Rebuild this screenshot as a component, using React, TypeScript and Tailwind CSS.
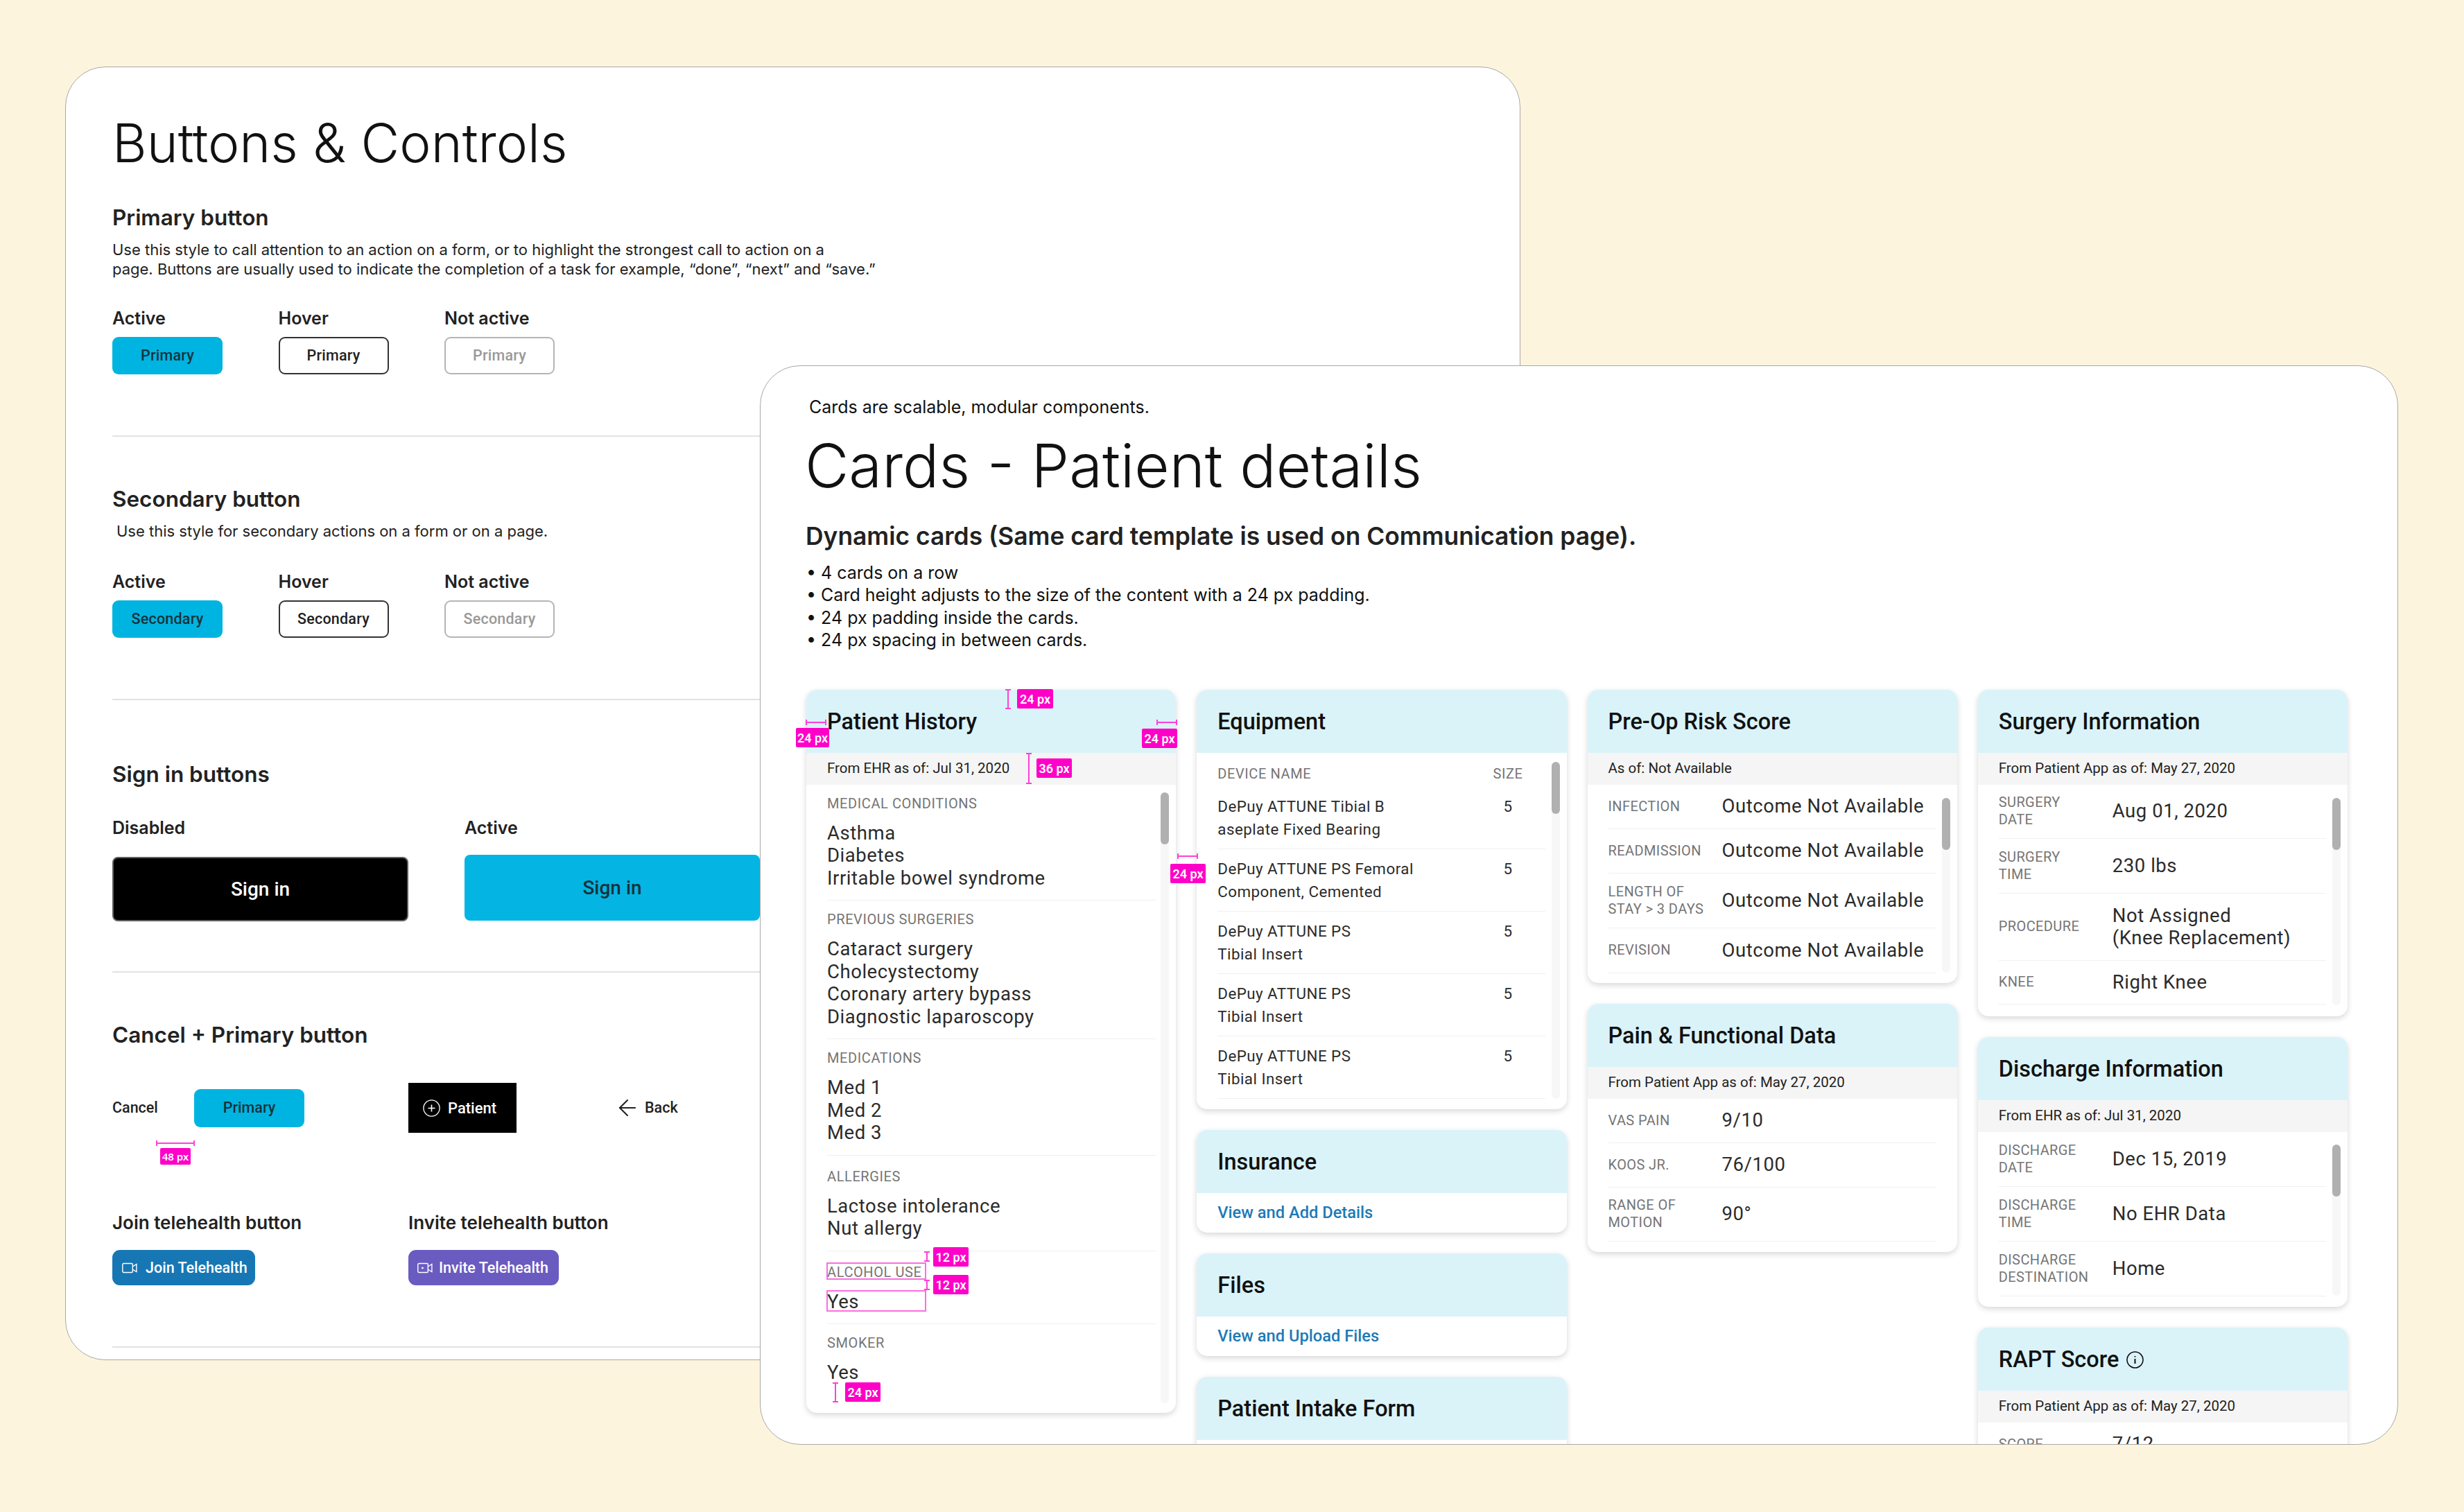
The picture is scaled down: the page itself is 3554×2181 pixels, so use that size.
import { ArrowLeft } from "lucide-react";
import type { ReactNode } from "react";

const history = [
  { label: "MEDICAL CONDITIONS", values: ["Asthma", "Diabetes", "Irritable bowel syndrome"], cls: "pt-[15px] border-b" },
  { label: "PREVIOUS SURGERIES", values: ["Cataract surgery", "Cholecystectomy", "Coronary artery bypass", "Diagnostic laparoscopy"], cls: "pt-[15px] border-b" },
  { label: "MEDICATIONS", values: ["Med 1", "Med 2", "Med 3"], cls: "pt-[15px] border-b" },
  { label: "ALLERGIES", values: ["Lactose intolerance", "Nut allergy"], cls: "pt-[18px] border-b" },
  { label: "ALCOHOL USE", values: ["Yes"], cls: "pt-[18px] border-b" },
  { label: "SMOKER", values: ["Yes"], cls: "pt-[15px]" },
];

const devices = [
  ["DePuy ATTUNE Tibial B", "aseplate Fixed Bearing"],
  ["DePuy ATTUNE PS Femoral", "Component, Cemented"],
  ["DePuy ATTUNE PS", "Tibial Insert"],
  ["DePuy ATTUNE PS", "Tibial Insert"],
  ["DePuy ATTUNE PS", "Tibial Insert"],
];

function ButtonRow({ text, className }: { text: string; className: string }) {
  return (
    <>
      <div className={`grid grid-cols-[239.5px_239.5px_239.5px] text-[25px] leading-[30px] font-semibold text-[#222] ${className}`}>
        <span>Active</span>
        <span>Hover</span>
        <span>Not active</span>
      </div>
      <div className="mt-[12px] grid grid-cols-[239.5px_239.5px_239.5px] font-['Roboto',sans-serif] text-[21.5px] font-medium tracking-[0.01em]">
        <div className="flex h-[54px] w-[159px] items-center justify-center rounded-[9px] bg-[#00b4e1] text-[#17323c]">{text}</div>
        <div className="flex h-[54px] w-[159px] items-center justify-center rounded-[9px] border-2 border-[#333] text-[#222]">{text}</div>
        <div className="flex h-[54px] w-[159px] items-center justify-center rounded-[9px] border-2 border-[#b5b5b5] text-[#999]">{text}</div>
      </div>
    </>
  );
}

function Divider({ className }: { className: string }) {
  return <div className={`h-[2px] bg-[#e2e2e2] ${className}`} />;
}

function Heading({ children, className }: { children: ReactNode; className: string }) {
  return <h2 className={`text-[31.5px] leading-[40px] font-semibold text-[#222] ${className}`}>{children}</h2>;
}

function ButtonsWindow() {
  return (
    <section className="absolute top-[96px] left-[94px] h-[1866px] w-[2099px] overflow-hidden rounded-[58px] border border-[#a8a8a8] bg-white pt-[64px] pl-[67px] font-['Inter',sans-serif]">
      <h1 className="text-[76.5px] leading-[90px] font-light text-[#111]">Buttons &amp; Controls</h1>
      <Heading className="mt-[43px]">Primary button</Heading>
      <p className="mt-[12px] w-[1200px] text-[22px] leading-[28px] text-[#222]">
        Use this style to call attention to an action on a form, or to highlight the strongest call to action on a
        <br />
        page. Buttons are usually used to indicate the completion of a task for example, “done”, “next” and “save.”
      </p>
      <ButtonRow text="Primary" className="mt-[42px]" />
      <Divider className="mt-[88px]" />
      <Heading className="mt-[70px]">Secondary button</Heading>
      <p className="mt-[12px] ml-[6px] text-[22px] leading-[28px] text-[#222]">
        Use this style for secondary actions on a form or on a page.
      </p>
      <ButtonRow text="Secondary" className="mt-[44px]" />
      <Divider className="mt-[88px]" />
      <Heading className="mt-[87px]">Sign in buttons</Heading>
      <div className="mt-[42px] flex items-start text-[25px] leading-[30px] font-semibold text-[#222]">
        <div className="w-[508px]">
          <div>Disabled</div>
          <div className="mt-[27px] flex h-[93px] w-[427px] items-center justify-center rounded-[8px] border-2 border-[#5f5f5f] bg-black font-['Roboto',sans-serif] text-[28px] font-medium text-white">
            Sign in
          </div>
        </div>
        <div>
          <div>Active</div>
          <div className="mt-[24px] flex h-[95px] w-[426px] items-center justify-center rounded-[8px] bg-[#04b5e3] font-['Roboto',sans-serif] text-[28px] font-medium text-[#17323c]">
            Sign in
          </div>
        </div>
      </div>
      <Divider className="mt-[72px]" />
      <Heading className="mt-[70px]">Cancel + Primary button</Heading>
      <div className="mt-[49px] flex h-[72px] items-center font-['Roboto',sans-serif] text-[21.5px] font-medium text-[#222]">
        <span className="w-[118px]">Cancel</span>
        <span className="flex h-[55px] w-[159px] items-center justify-center rounded-[9px] bg-[#00b4e1] text-[#17323c]">Primary</span>
        <div className="ml-[150px] flex h-[72px] w-[156px] items-center gap-[11px] bg-black pl-[21px] text-white">
          <svg viewBox="0 0 25 25" className="h-[25px] w-[25px]" fill="none" stroke="currentColor" strokeWidth="1.3">
            <circle cx="12.5" cy="12.5" r="11.6" />
            <path d="M12.5 7.5v10M7.5 12.5h10" strokeWidth="1.6" />
          </svg>
          <span className="text-[22px]">Patient</span>
        </div>
        <ArrowLeft className="ml-[141px] h-[38px] w-[38px]" strokeWidth={1.3} />
        <span className="ml-[6px]">Back</span>
      </div>
      <div className="mt-[115px] grid w-[1000px] grid-cols-[427px_auto] text-[26px] leading-[30px] font-semibold text-[#222]">
        <div>
          <div>Join telehealth button</div>
          <div className="mt-[24px] flex h-[51px] w-[206px] items-center gap-[12px] rounded-[11px] bg-[#1777b4] pl-[14px] font-['Roboto',sans-serif] text-[21.5px] font-medium text-white">
            <svg viewBox="0 0 22 16" className="h-[16px] w-[22px]" fill="none" stroke="currentColor" strokeWidth="1.4">
              <rect x="0.8" y="1.5" width="14.5" height="13" rx="1.5" />
              <path d="M15.3 6l5.6-3.5v11L15.3 10" />
            </svg>
            Join Telehealth
          </div>
        </div>
        <div>
          <div>Invite telehealth button</div>
          <div className="mt-[24px] flex h-[51px] w-[217px] items-center gap-[9px] rounded-[11px] bg-[#6a5bc1] pl-[13px] font-['Roboto',sans-serif] text-[21.5px] font-medium text-white">
            <svg viewBox="0 0 22 16" className="h-[16px] w-[22px]" fill="none" stroke="currentColor" strokeWidth="1.4">
              <rect x="0.8" y="1.5" width="14.5" height="13" rx="1.5" />
              <path d="M15.3 6l5.6-3.5v11L15.3 10" />
              <path d="M5.5 8h4M7.5 6.5v3" strokeWidth="1.2" />
            </svg>
            Invite Telehealth
          </div>
        </div>
      </div>
      <Divider className="mt-[88px]" />
    </section>
  );
}

function Card({ title, children, icon }: { title: string; children: ReactNode; icon?: ReactNode }) {
  return (
    <div className="overflow-hidden rounded-[15px] bg-white shadow-[0_3px_8px_rgba(0,0,0,0.16)]">
      <div className="flex h-[91px] items-center gap-[11px] bg-[#daf3f9] px-[30px] pt-[2px] text-[32.5px] font-medium text-[#111]">
        {title}
        {icon}
      </div>
      {children}
    </div>
  );
}

function SubBar({ children }: { children: ReactNode }) {
  return <div className="flex h-[46px] items-center bg-[#f5f5f5] px-[30px] text-[20.5px] text-[#222]">{children}</div>;
}

function Scroll({ className }: { className: string }) {
  return (
    <div className={`absolute right-[10px] w-[12px] rounded-[6px] bg-[#f7f7f7] ${className}`}>
      <div className="h-[75px] rounded-[6px] bg-[#b0b0b0]" />
    </div>
  );
}

function Field({ label, value, cls }: { label: ReactNode; value: ReactNode; cls: string }) {
  return (
    <div className={`flex items-center border-b border-[#f0f0f0] ${cls}`}>
      <div className="w-[164px] shrink-0 text-[20px] leading-[25px] tracking-[0.02em] text-[#757575]">{label}</div>
      <div className="text-[27.5px] leading-[32px] tracking-[0.02em] text-[#2b2b2b]">{value}</div>
    </div>
  );
}

function LinkCard({ title, link }: { title: string; link?: string }) {
  return (
    <Card title={title}>
      <div className="flex h-[57px] items-center px-[30px] pt-[1px] text-[23.7px] font-medium text-[#1d7ab5]">{link}</div>
    </Card>
  );
}

function PatientHistory() {
  return (
    <Card title="Patient History">
      <SubBar>From EHR as of: Jul 31, 2020</SubBar>
      <div className="relative pr-[29px] pb-[26px] pl-[30px]">
        {history.map((section) => (
          <div key={section.label} className={`border-[#f0f0f0] pb-[15px] ${section.cls}`}>
            <div className="text-[20px] leading-[24px] tracking-[0.03em] text-[#757575]">{section.label}</div>
            <div className="mt-[15px] text-[27.5px] leading-[32.5px] tracking-[0.02em] text-[#2b2b2b]">
              {section.values.map((v) => (
                <div key={v}>{v}</div>
              ))}
            </div>
          </div>
        ))}
        <Scroll className="top-[11px] bottom-[14px]" />
      </div>
    </Card>
  );
}

function Equipment() {
  return (
    <Card title="Equipment">
      <div className="relative pt-[18px] pr-[31px] pb-[15px] pl-[30px]">
        <div className="flex pb-[7px] text-[20px] leading-[24px] tracking-[0.03em] text-[#757575]">
          <span className="flex-1">DEVICE NAME</span>
          <span className="w-[107px] text-center">SIZE</span>
        </div>
        {devices.map((d, i) => (
          <div key={i} className="flex border-b border-[#f0f0f0] pt-[12px] pb-[11px] text-[22.4px] leading-[33px] tracking-[0.02em] text-[#2b2b2b]">
            <div className="flex-1">
              {d[0]}
              <br />
              {d[1]}
            </div>
            <div className="w-[107px] text-center">5</div>
          </div>
        ))}
        <Scroll className="top-[13px] bottom-[15px]" />
      </div>
    </Card>
  );
}

function CardsWindow() {
  return (
    <section className="absolute top-[527px] left-[1096px] h-[1557px] w-[2363px] overflow-hidden rounded-[58px] border border-[#a8a8a8] bg-white pt-[43px] pl-[66px] font-['Roboto',sans-serif]">
      <div className="font-['Inter',sans-serif] text-[#111]">
        <p className="ml-[4px] text-[25px] leading-[32px]">Cards are scalable, modular components.</p>
        <h1 className="mt-[19px] -ml-[2px] text-[87px] leading-[100px] font-light">Cards - Patient details</h1>
        <h2 className="mt-[30px] -ml-[1px] text-[35.4px] leading-[44px] font-semibold text-[#222]">
          Dynamic cards (Same card template is used on Communication page).
        </h2>
        <ul className="mt-[14px] text-[25px] leading-[32.4px]">
          <li>• 4 cards on a row</li>
          <li>• Card height adjusts to the size of the content with a 24 px padding.</li>
          <li>• 24 px padding inside the cards.</li>
          <li>• 24 px spacing in between cards.</li>
        </ul>
      </div>
      <div className="mt-[55px] grid w-[2223px] grid-cols-4 items-start gap-[30px]">
        <PatientHistory />
        <div className="flex flex-col gap-[30px]">
          <Equipment />
          <LinkCard title="Insurance" link="View and Add Details" />
          <LinkCard title="Files" link="View and Upload Files" />
          <LinkCard title="Patient Intake Form" />
        </div>
        <div className="flex flex-col gap-[30px]">
          <Card title="Pre-Op Risk Score">
            <SubBar>As of: Not Available</SubBar>
            <div className="relative pr-[31px] pb-[14px] pl-[30px]">
              <Field cls="h-[64px]" label="INFECTION" value="Outcome Not Available" />
              <Field cls="h-[64px]" label="READMISSION" value="Outcome Not Available" />
              <Field cls="h-[79px]" label={<>LENGTH OF<br />STAY &gt; 3 DAYS</>} value="Outcome Not Available" />
              <Field cls="h-[65px]" label="REVISION" value="Outcome Not Available" />
              <Scroll className="top-[19px] bottom-[15px]" />
            </div>
          </Card>
          <Card title="Pain & Functional Data">
            <SubBar>From Patient App as of: May 27, 2020</SubBar>
            <div className="pr-[31px] pb-[15px] pl-[30px]">
              <Field cls="h-[64px]" label="VAS PAIN" value="9/10" />
              <Field cls="h-[64px]" label="KOOS JR." value="76/100" />
              <Field cls="h-[78px]" label={<>RANGE OF<br />MOTION</>} value="90°" />
            </div>
          </Card>
        </div>
        <div className="flex flex-col gap-[30px]">
          <Card title="Surgery Information">
            <SubBar>From Patient App as of: May 27, 2020</SubBar>
            <div className="relative pr-[31px] pb-[17px] pl-[30px]">
              <Field cls="h-[78px]" label={<>SURGERY<br />DATE</>} value="Aug 01, 2020" />
              <Field cls="h-[79px]" label={<>SURGERY<br />TIME</>} value="230 lbs" />
              <Field cls="h-[97px]" label="PROCEDURE" value={<>Not Assigned<br />(Knee Replacement)</>} />
              <Field cls="h-[63px]" label="KNEE" value="Right Knee" />
              <Scroll className="top-[19px] bottom-[16px]" />
            </div>
          </Card>
          <Card title="Discharge Information">
            <SubBar>From EHR as of: Jul 31, 2020</SubBar>
            <div className="relative pr-[31px] pb-[15px] pl-[30px]">
              <Field cls="h-[79px]" label={<>DISCHARGE<br />DATE</>} value="Dec 15, 2019" />
              <Field cls="h-[79px]" label={<>DISCHARGE<br />TIME</>} value="No EHR Data" />
              <Field cls="h-[79px]" label={<>DISCHARGE<br />DESTINATION</>} value="Home" />
              <Scroll className="top-[18px] bottom-[16px]" />
            </div>
          </Card>
          <Card
            title="RAPT Score"
            icon={
              <svg viewBox="0 0 25 25" className="h-[25px] w-[25px]" fill="none" stroke="currentColor" strokeWidth="1.6">
                <circle cx="12.5" cy="12.5" r="11.5" />
                <path d="M12.5 11v7M12.5 7v1.6" strokeWidth="2" />
              </svg>
            }
          >
            <SubBar>From Patient App as of: May 27, 2020</SubBar>
            <div className="pr-[31px] pb-[15px] pl-[30px]">
              <Field cls="h-[64px]" label="SCORE" value="7/12" />
            </div>
          </Card>
        </div>
      </div>
      <Annotations />
    </section>
  );
}

function Badge({ className, children }: { className: string; children: ReactNode }) {
  return (
    <span className={`absolute flex h-[28px] items-center justify-center rounded-[2px] bg-[#ff00c8] text-[18px] font-semibold text-white ${className}`}>
      {children}
    </span>
  );
}

function HRule({ className }: { className: string }) {
  return (
    <span className={`absolute flex h-[8px] items-center border-x-2 border-[#ff40d8] ${className}`}>
      <span className="h-[2px] w-full bg-[#ff40d8]" />
    </span>
  );
}

function VRule({ className }: { className: string }) {
  return (
    <span className={`absolute flex w-[8px] justify-center border-y-2 border-[#ff40d8] ${className}`}>
      <span className="h-full w-[2px] bg-[#ff40d8]" />
    </span>
  );
}

// red-line spec marks that sit over the Patient History card
function Annotations() {
  return (
    <>
      <VRule className="top-[466px] left-[353px] h-[29px]" />
      <Badge className="top-[466px] left-[370px] w-[52px]">24 px</Badge>
      <HRule className="top-[510px] left-[65px] w-[30px]" />
      <Badge className="top-[522px] left-[51px] w-[48px]">24 px</Badge>
      <HRule className="top-[510px] left-[571px] w-[30px]" />
      <Badge className="top-[523px] left-[550px] w-[51px]">24 px</Badge>
      <VRule className="top-[558px] left-[383px] h-[45px]" />
      <Badge className="top-[566px] left-[398px] w-[51px]">36 px</Badge>
      <HRule className="top-[703px] left-[601px] w-[30px]" />
      <Badge className="top-[718px] left-[591px] w-[51px]">24 px</Badge>
      <VRule className="top-[1277px] left-[236px] h-[15px]" />
      <Badge className="top-[1271px] left-[249px] w-[51px]">12 px</Badge>
      <VRule className="top-[1318px] left-[236px] h-[15px]" />
      <Badge className="top-[1311px] left-[249px] w-[51px]">12 px</Badge>
      <span className="absolute top-[1293px] left-[95px] h-[25px] w-[144px] border-2 border-[#ff6ce0]" />
      <span className="absolute top-[1333px] left-[95px] h-[31px] w-[144px] border-2 border-[#ff6ce0]" />
      <VRule className="top-[1466px] left-[104px] h-[29px]" />
      <Badge className="top-[1466px] left-[122px] w-[51px]">24 px</Badge>
    </>
  );
}

export default function App() {
  return (
    <main className="relative h-[2181px] w-[3554px] overflow-hidden bg-[#fdf4dd]">
      <ButtonsWindow />
      <div className="absolute top-[1648px] left-[225px] w-[56px]">
        <HRule className="top-[-3px] left-0 w-[56px]" />
        <span className="absolute top-[8px] left-[6px] flex h-[24px] w-[44px] items-center justify-center rounded-[2px] bg-[#ff00c8] text-[15px] font-semibold text-white">
          48 px
        </span>
      </div>
      <CardsWindow />
    </main>
  );
}
